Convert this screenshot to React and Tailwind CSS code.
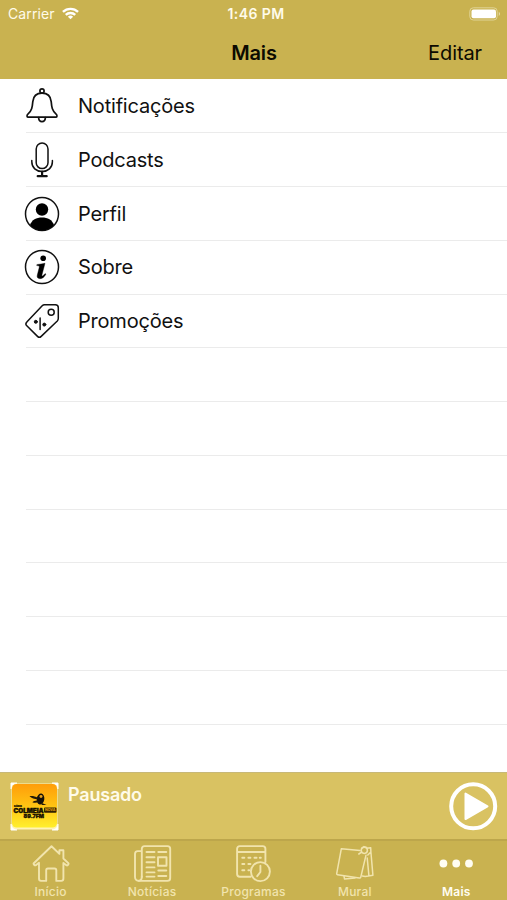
import React from 'react';

// ─── Menu icons ───────────────────────────────────────────────────────────────

const menuIcon = {
  width: 36,
  height: 36,
  viewBox: '0 0 36 36',
  fill: 'none',
  stroke: '#111',
  strokeWidth: 1.5,
  strokeLinecap: 'round',
  strokeLinejoin: 'round',
  'aria-hidden': true,
};

function BellIcon() {
  return (
    <svg {...menuIcon} strokeWidth="1.700">
      <circle cx="18" cy="3" r="2.100" />
      <path d="M18 5.200c-5.400 0-8.700 3.400-9.200 8.400-.5 5.800-1 9.300-4.900 12.500-1.300 1.100-1.200 3.100.5 3.100h27.200c1.700 0 1.800-2 .5-3.100-3.900-3.200-4.400-6.700-4.900-12.500-.5-5-3.800-8.400-9.200-8.400z" />
      <path d="M14.600 29.600c.2 2.700 1.500 4 3.400 4s3.200-1.300 3.400-4" />
    </svg>
  );
}

function MicIcon() {
  return (
    <svg {...menuIcon}>
      <rect x="12.200" y="1" width="11.800" height="25.600" rx="5.900" />
      <path d="M7.800 18.500v1.300c0 5.900 4.400 9.700 10.300 9.700s10.300-3.800 10.300-9.700v-1.300" />
      <path d="M18.100 29.500v4.500M13.700 34.200h9" strokeWidth="2.200" />
    </svg>
  );
}

function ProfileIcon() {
  return (
    <svg {...menuIcon}>
      <circle cx="18" cy="18" r="16.500" />
      <circle cx="18" cy="13.500" r="6.200" fill="#000" stroke="none" />
      <path d="M6 29c1.800-5 6.300-7.400 12-7.400S28.200 24 30 29c-3 3.600-7.300 5.500-12 5.500S9 32.600 6 29z" fill="#000" stroke="none" />
    </svg>
  );
}

function InfoIcon() {
  return (
    <svg {...menuIcon}>
      <circle cx="18" cy="18" r="16.500" />
      <circle cx="19.200" cy="9.200" r="2.800" fill="#000" stroke="none" />
      <path
        d="M13.200 15.500c2.600-.2 5.100-.7 7.800-1.200l-3 11.400c-.3 1.100.1 1.500.9 1.100.8-.5 1.500-1.300 2.200-2.200l.8.600c-1.700 3.100-3.700 4.500-5.900 4.500-2.300 0-3.300-1.400-2.700-3.600l1.900-7.600c.4-1.400 0-1.800-2.200-1.900z"
        fill="#000"
        stroke="#000"
        strokeWidth=".4"
      />
    </svg>
  );
}

function TagIcon() {
  return (
    <svg {...menuIcon}>
      <path d="M20.500 1.800h10.800c1.900 0 3 1.100 3 3v10.800c0 1-.3 1.700-1 2.400L17.200 33.400c-1.200 1.200-2.500 1.200-3.700 0l-10.700-10.600c-1.200-1.200-1.200-2.500 0-3.700L18.200 2.800c.7-.7 1.300-1 2.300-1z" />
      <circle cx="27.200" cy="9.200" r="3" />
      <path d="M16.100 15v11.400" />
      <circle cx="11.800" cy="18.800" r="1.500" fill="#111" strokeWidth="1" />
      <circle cx="20.300" cy="21.600" r="1.500" fill="#111" strokeWidth="1" />
    </svg>
  );
}

// ─── Tab bar icons ────────────────────────────────────────────────────────────

const tabIcon = {
  width: 40,
  height: 40,
  viewBox: '0 0 40 40',
  fill: 'none',
  stroke: 'currentColor',
  strokeWidth: 1.9,
  strokeLinecap: 'round',
  strokeLinejoin: 'round',
  'aria-hidden': true,
};

function HomeIcon() {
  return (
    <svg {...tabIcon}>
      <path d="M20.500 1.200 2.800 18.200c-.7.800 1 2.600 2 2L8 17.800v15.800c0 1.500.6 2.300 2 2.300h5.200V25.300c0-1.200.5-1.800 1.700-1.800h6.600c1.200 0 1.800.6 1.800 1.800v10.600h5c1.400 0 2.100-.8 2.100-2.300V17.900l3 2.400c1 .6 2.700-1.300 1.900-2.100l-4.900-4.700V5.200h-4v3.700z" />
    </svg>
  );
}

function NewsIcon() {
  return (
    <svg {...tabIcon}>
      <path d="M9.800 32V3.800c0-1.700 1-2.700 2.700-2.700h23c1.700 0 2.700 1 2.700 2.700V33c0 1.800-1.100 2.900-2.900 2.900H7c-2.400 0-4-1.600-4-4V9.100c0-1.900 1-3 2.700-3h4.100" />
      <path d="M9.800 31.500c0 2.800-1.200 4.200-3 4.200" />
      <path d="M14.500 7h8M26.300 7h8M14.500 12.200h8M14.500 17.300h8M14.500 22.400h8M14.500 27.400h8M14.500 31.600h8M26.300 25.500h8M26.300 31h8" />
      <rect x="26" y="12.200" width="8.500" height="8.600" />
    </svg>
  );
}

function ScheduleIcon() {
  return (
    <svg {...tabIcon}>
      <path d="M17.600 31.800H6.800c-1.700 0-2.700-1-2.700-2.700V3.800c0-1.700 1-2.700 2.700-2.700h22.900c1.700 0 2.700 1 2.700 2.700v13.200M4.100 7h28.300" />
      <path d="M9.300 12.700h2M15.400 12.700h2M21.500 12.700h2M26.800 12.700h1M9.300 19h2M15.400 19h2M9.300 25.200h2M15.400 25.200h.8" strokeWidth="2" />
      <circle cx="27.400" cy="26.600" r="9.500" />
      <path d="M27.400 20.800v6.200l-3.200 4.200" />
    </svg>
  );
}

function BoardIcon() {
  return (
    <svg {...tabIcon} strokeWidth="1.500">
      <path d="M25 5.600 6.300 3.800 1.700 28.600c-.1.700.1 1 .8 1.100l21.800 3.400c.8.100 1.300-.2 1.500-1L31 10.200" />
      <path d="M31.500 3.200l4.200-.5.200 4.300 2 23.300-7.600 1.200-2.900-.5M32.200 13l1.700 17.400M35.900 7l-3.100 3M9 31l.5 2.900 10.500-.8" />
      <circle cx="29.300" cy="5.300" r="3.100" />
      <path d="M26.600 7.200 23.800 9M26.600 3.300 29 1.600l2.600.8" />
    </svg>
  );
}

function MoreIcon() {
  return (
    <svg {...tabIcon} stroke="none" fill="currentColor">
      <circle cx="7.400" cy="18.500" r="3.900" />
      <circle cx="20.200" cy="18.500" r="3.900" />
      <circle cx="33" cy="18.500" r="3.900" />
    </svg>
  );
}

// ─── Content ──────────────────────────────────────────────────────────────────

const MENU = [
  { label: 'Notificações', Icon: BellIcon },
  { label: 'Podcasts', Icon: MicIcon },
  { label: 'Perfil', Icon: ProfileIcon },
  { label: 'Sobre', Icon: InfoIcon },
  { label: 'Promoções', Icon: TagIcon },
];

const EMPTY_ROWS = 7;

const TABS = [
  { label: 'Início', Icon: HomeIcon },
  { label: 'Notícias', Icon: NewsIcon },
  { label: 'Programas', Icon: ScheduleIcon },
  { label: 'Mural', Icon: BoardIcon },
  { label: 'Mais', Icon: MoreIcon, active: true },
];

function StatusBar() {
  return (
    <div className="grid h-[27px] grid-cols-3 items-center pl-2 pr-[6px] text-[14px] text-[#fffbea]">
      <div className="flex items-center gap-[7px]">
        <span className="tracking-[0.1px]">Carrier</span>
        <svg width="17" height="13" viewBox="0 0 18 13" fill="none" stroke="#fff" strokeWidth="2.500" aria-hidden="true">
          <path d="M1 4.800a11.500 11.500 0 0 1 16 0M4 8a7.200 7.200 0 0 1 10 0" />
          <path d="M9 12.700 6.200 10a4 4 0 0 1 5.600 0z" fill="#fff" stroke="none" />
        </svg>
      </div>
      <span className="pl-[3px] text-center font-semibold tracking-[0.4px]">1:46 PM</span>
      <svg className="justify-self-end" width="32" height="14" viewBox="0 0 32 14" aria-hidden="true">
        <rect x=".8" y=".8" width="27.400" height="12.200" rx="3.500" fill="none" stroke="#e0d395" strokeWidth="1" />
        <rect x="2.500" y="2.500" width="24.500" height="8.800" rx="2" fill="#fff" />
        <path d="M29.800 4.800c1.500.8 1.500 3.400 0 4.200z" fill="#e9dfb0" />
      </svg>
    </div>
  );
}

function StationLogo() {
  return (
    <svg width="50" height="50" viewBox="0 0 50 50" aria-hidden="true">
      <defs>
        <linearGradient id="station-bg" x1="0" y1="0" x2="0" y2="1">
          <stop offset="0" stopColor="#ff9d0a" />
          <stop offset=".5" stopColor="#ffc313" />
          <stop offset="1" stopColor="#ffef2c" />
        </linearGradient>
      </defs>
      <path d="M2 2h6L2 8zM43 2h6v6zM49 43v6h-6zM8 49H2v-6z" fill="#fff" stroke="#fff" strokeWidth="1" />
      <rect x="2.500" y="2.500" width="46" height="46" rx="5" fill="#fff3b5" />
      <rect x="3" y="3" width="45" height="43.500" rx="4.500" fill="url(#station-bg)" />
      <ellipse cx="31.500" cy="18" rx="3.800" ry="5.500" fill="#17120a" transform="rotate(10 31.500 18)" />
      <ellipse cx="32" cy="15.500" rx="1.500" ry="1.400" fill="#e9a01a" />
      <path d="M29 17c-3-1.800-6-2.300-8.500-1.800 2 2 5.200 3 8 3zM29 19.500c-2.500-.3-4.500.5-5.600 1.800 2 .8 4.500.6 6.500-.3zM33 22l4.500 2h-5z" fill="#241b08" />
      <g fill="#151000" stroke="#151000" fontFamily="Inter, sans-serif" fontWeight="900">
        <text x="5" y="26" fontSize="2.200" strokeWidth=".2" textLength="8" lengthAdjust="spacingAndGlyphs">RÁDIO</text>
        <text x="4.500" y="31.600" fontSize="5.800" strokeWidth=".4" textLength="30" lengthAdjust="spacingAndGlyphs">COLMEIA</text>
        <text x="14.500" y="37.300" fontSize="4.800" strokeWidth=".3" textLength="20.500" lengthAdjust="spacingAndGlyphs">89.7FM</text>
      </g>
      <rect x="35" y="26.500" width="12.500" height="5.200" rx="1" fill="#302100" />
      <text x="36" y="30.300" fontSize="3.200" fontWeight="800" fontFamily="Inter, sans-serif" fill="#d99c12" textLength="10.500" lengthAdjust="spacingAndGlyphs">NOVA</text>
    </svg>
  );
}

function Player() {
  return (
    <div className="flex h-[67px] items-center justify-between border-t border-[#c7b878] bg-[#d9c262] px-[9px]">
      <div className="flex gap-[9px]">
        <StationLogo />
        <span className="pt-[2px] text-[18px] font-semibold leading-6 tracking-[-0.2px] text-[#fffbea]">Pausado</span>
      </div>
      <svg width="50" height="50" viewBox="0 0 50 50" aria-hidden="true">
        <circle cx="25.200" cy="25.300" r="22" fill="none" stroke="#fff" strokeWidth="4" />
        <path d="M17.500 12.500v25.600L39.500 25.300z" fill="#fff" stroke="#fff" strokeWidth="2" strokeLinejoin="round" />
      </svg>
    </div>
  );
}

export default function App() {
  return (
    <div className="flex h-[900px] w-[507px] flex-col overflow-hidden bg-white font-['Inter',sans-serif]">
      <header className="h-[79px] bg-[#c9b250]">
        <StatusBar />
        <div className="grid h-[51px] grid-cols-3 items-center pr-[25px] text-[20px] text-[#0c0a00]">
          <span />
          <h1 className="pl-[26px] text-center font-semibold tracking-[-0.2px]">Mais</h1>
          <button className="text-right tracking-[-0.1px]">Editar</button>
        </div>
      </header>

      <ul className="flex-1 pt-[0.7px]">
        {MENU.map(({ label, Icon }) => (
          <li key={label} className="ml-[26px] flex h-[53.750px] items-center border-b border-[#ebebeb]">
            <span className="-ml-[2px] mr-[18px]">
              <Icon />
            </span>
            <span className="text-[20px] tracking-[-0.2px] text-[#111]">{label}</span>
          </li>
        ))}
        {Array.from({ length: EMPTY_ROWS }, (_, i) => (
          <li key={i} className="ml-[26px] h-[53.750px] border-b border-[#ebebeb]" />
        ))}
      </ul>

      <Player />

      <nav className="grid h-[61px] grid-cols-5 border-t-2 border-[#bda64b] bg-[#c9b250] pt-1">
        {TABS.map(({ label, Icon, active }) => (
          <div
            key={label}
            className={`flex flex-col items-center text-[12px] leading-[14px] tracking-[0.25px] ${
              active ? 'font-semibold text-[#fffdf2]' : 'font-medium text-[#f1e4ad]'
            }`}
          >
            <Icon />
            <span>{label}</span>
          </div>
        ))}
      </nav>
    </div>
  );
}
